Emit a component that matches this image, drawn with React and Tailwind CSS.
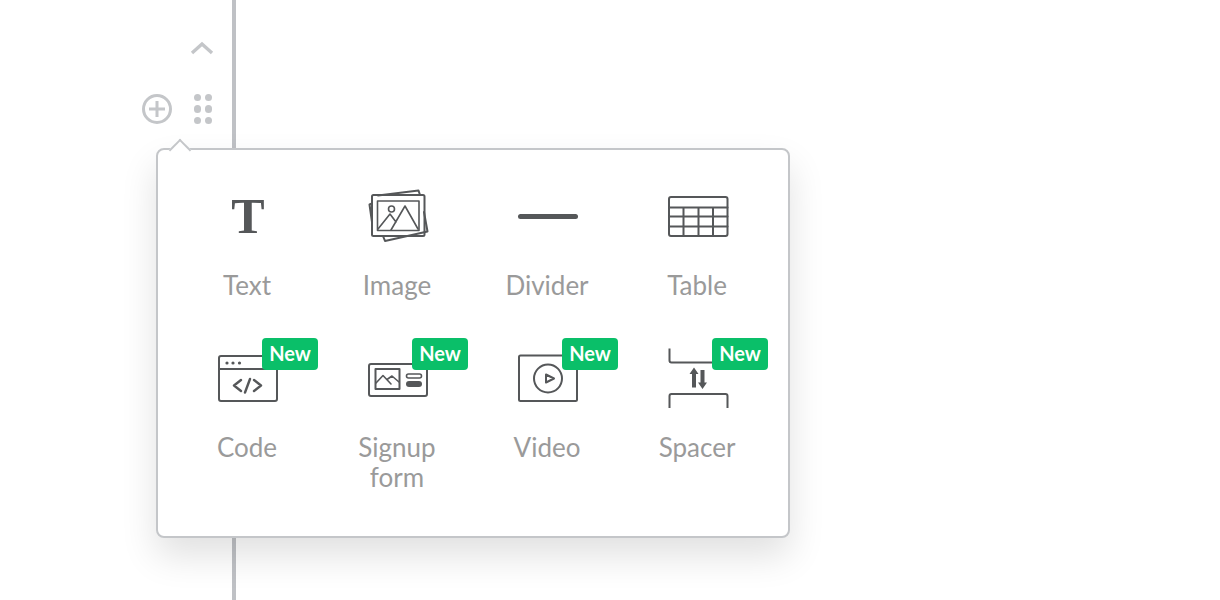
const S = "#555759";

function Svg({ box, children }) {
  return (
    <svg width="60" height="60" viewBox={box} fill="none" stroke={S} strokeWidth="2" strokeLinecap="round" strokeLinejoin="round" className="block overflow-visible">
      {children}
    </svg>
  );
}

const TextIcon = () => (
  <div className="w-[60px] h-[60px] flex items-center justify-center pl-[2px] text-[50px] leading-[60px] font-bold text-[#555759] font-['Liberation_Serif',serif]">T</div>
);
const ImageIcon = () => (
  <Svg box="367 186 60 60">
    <path d="M372 203.5L369.5 204.5L372 222M378 195.5L418.5 190.5L420 195M424 212L427.5 231.5L385 241L383 236" />
    <rect x="372" y="195" width="52.5" height="41" rx="1.5" />
    <rect x="377.5" y="201" width="41.5" height="29.5" strokeWidth="1.6" />
    <path d="M378 229L390 214L396 222M391 230L405 206L418 229" strokeWidth="1.6" />
    <circle cx="391.5" cy="209" r="3" strokeWidth="1.6" />
  </Svg>
);
const DividerIcon = () => (
  <Svg box="517 186 60 60">
    <path d="M520.5 216.5H575.5" strokeWidth="5" />
  </Svg>
);
const TableIcon = () => (
  <Svg box="667 186 60 60">
    <rect x="669" y="197" width="58.5" height="39" rx="2" />
    <path d="M669 207.5H727.5M669 216.5H727.5M669 226.5H727.5M683.5 207.5V236M698.5 207.5V236M713 207.5V236" />
  </Svg>
);
const CodeIcon = () => (
  <Svg box="217 348 60 60">
    <rect x="219" y="356" width="58" height="45" rx="2" />
    <path d="M219 369H277" />
    <path d="M234 385.5L241 380M234 385.5L241 391M250 379L245 392.5M254 380L261 385.5L254 391" strokeWidth="2.4" />
    <g fill={S} stroke="none">
      <circle cx="227" cy="363" r="1.6" />
      <circle cx="233" cy="363" r="1.6" />
      <circle cx="239.5" cy="363" r="1.6" />
    </g>
  </Svg>
);
const SignupIcon = () => (
  <Svg box="367 348 60 60">
    <rect x="369" y="364" width="58" height="32" rx="2" />
    <rect x="375.5" y="369" width="24" height="20" />
    <path d="M376 383L383 375.5L391 384M387 379.5L392 376L399 382" strokeWidth="1.6" />
    <rect x="406.5" y="374" width="15" height="4" rx="2" strokeWidth="1.6" />
    <rect x="406" y="381" width="16" height="6" rx="3" fill={S} stroke="none" />
  </Svg>
);
const VideoIcon = () => (
  <Svg box="517 348 60 60">
    <rect x="519" y="355.5" width="58" height="45.5" rx="1.5" />
    <circle cx="548" cy="378.5" r="14" />
    <path d="M546 374.5L554 378.5L546 382.5Z" />
  </Svg>
);
const SpacerIcon = () => (
  <Svg box="667 348 60 60">
    <path d="M669.5 348.5V360.5Q669.5 362.5 671.5 362.5H726" strokeLinecap="butt" />
    <path d="M669.5 408V396Q669.5 394 671.5 394H725.5Q727.5 394 727.5 396V408" strokeLinecap="butt" />
    <path d="M694 367.5L698.5 374H696V387.5H692V374H689.5Z" fill={S} stroke="none" />
    <path d="M702.5 389L698 382.5H700.5V370H704.5V382.5H707Z" fill={S} stroke="none" />
  </Svg>
);

const items = [
  { label: "Text", Icon: TextIcon },
  { label: "Image", Icon: ImageIcon },
  { label: "Divider", Icon: DividerIcon },
  { label: "Table", Icon: TableIcon },
  { label: "Code", Icon: CodeIcon, isNew: true },
  { label: "Signup form", Icon: SignupIcon, isNew: true },
  { label: "Video", Icon: VideoIcon, isNew: true },
  { label: "Spacer", Icon: SpacerIcon, isNew: true },
];

function Item({ label, Icon, isNew }) {
  return (
    <div className="flex flex-col items-center">
      <div className="relative w-[60px] h-[60px]">
        <Icon />
        {isNew && (
          <span className="absolute left-[45px] top-[-10px] w-[56px] h-[32px] rounded-[4px] bg-[#0abf69] text-white text-[20px] leading-[31px] font-bold text-center">
            New
          </span>
        )}
      </div>
      <div className="mt-[24px] w-[110px] text-center text-[26px] leading-[30px] text-[#9a9a9a]">{label}</div>
    </div>
  );
}

export default function App() {
  return (
    <div className="relative w-[1220px] h-[600px] overflow-hidden bg-white font-['Lato',sans-serif]">
      <div className="w-[236px] h-full border-r-4 border-[#bfc1c5] flex flex-col items-end pr-[20px] pt-[41px]">
        <svg width="24" height="14" viewBox="0 0 24 14" fill="none" stroke="#c4c6c9" strokeWidth="3.4" className="block mr-[-2px]">
          <path d="M2 12L12 3L22 12" />
        </svg>
        <div className="flex items-center gap-[21px] mt-[38px]">
          <svg width="32" height="32" viewBox="0 0 32 32" fill="none" stroke="#c4c6c9" strokeWidth="3" className="block">
            <circle cx="16" cy="16" r="13.5" />
            <path d="M8 16H24M16 8V24" />
          </svg>
          <div className="grid grid-cols-2 gap-x-[3.5px] gap-y-[4px]">
            {[0, 1, 2, 3, 4, 5].map((i) => (
              <span key={i} className="w-[7.5px] h-[7.5px] rounded-full bg-[#c4c6c9]" />
            ))}
          </div>
        </div>
      </div>

      <div className="absolute left-[156px] top-[148px] w-[634px] h-[390px] bg-white border-2 border-[#c4c6c9] rounded-[8px] shadow-[0_18px_36px_rgba(0,0,0,0.12)] pl-[14px] pt-[36px]">
        <div className="absolute left-[14px] top-[-8px] w-[16px] h-[16px] rotate-45 bg-white border-l-2 border-t-2 border-[#c4c6c9]" />
        <div className="grid grid-cols-[repeat(4,150px)] gap-y-[48px]">
          {items.map((it) => (
            <Item key={it.label} {...it} />
          ))}
        </div>
      </div>
    </div>
  );
}
